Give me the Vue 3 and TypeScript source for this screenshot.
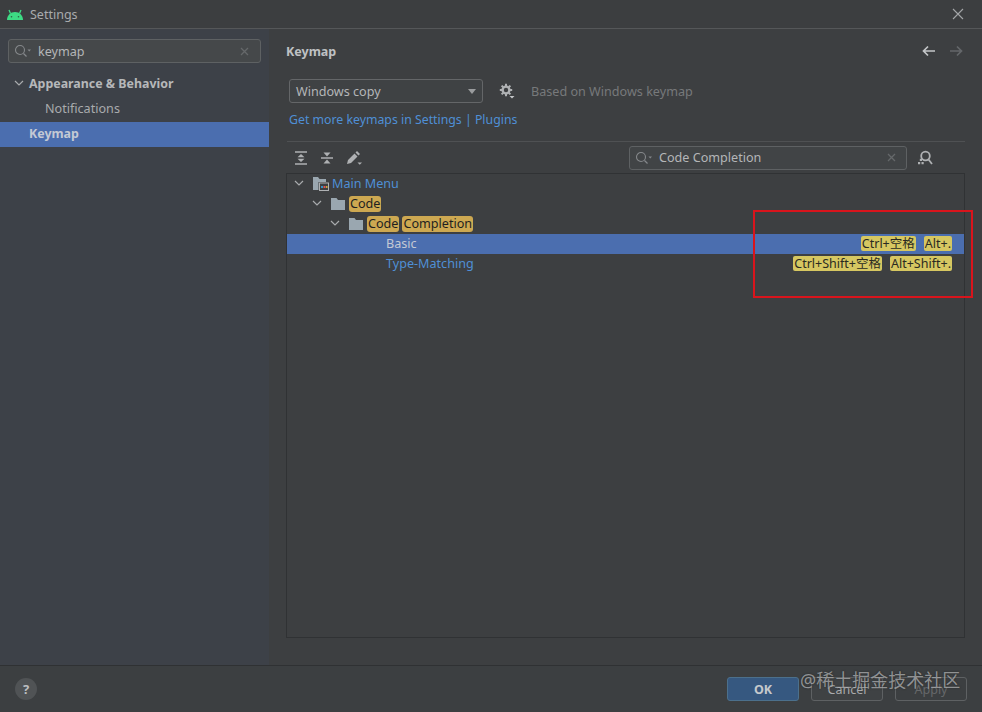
<script setup lang="ts">
  interface Row {
    label: string[];
    kind: 'menu' | 'folder' | 'action';
    depth: number;
    keys?: string[];
    selected?: boolean;
  }

  const rows: Row[] = [
    { label: ['Main Menu'], kind: 'menu', depth: 0 },
    { label: ['Code'], kind: 'folder', depth: 1 },
    { label: ['Code', 'Completion'], kind: 'folder', depth: 2 },
    { label: ['Basic'], kind: 'action', depth: 3, keys: ['Ctrl+空格', 'Alt+.'], selected: true },
    { label: ['Type-Matching'], kind: 'action', depth: 3, keys: ['Ctrl+Shift+空格', 'Alt+Shift+.'] },
  ];
</script>

<template>
  <div class="window">
    <header class="titlebar">
      <svg class="android" width="18" height="14" viewBox="0 0 18 14">
        <path d="M1 13c0-4.500 3.500-8 8-8s8 3.500 8 8z" fill="#3ddc84" />
        <path d="M4.500 6.500 3 3M13.500 6.500 15 3" stroke="#3ddc84" stroke-width="1.300" />
        <circle cx="5.500" cy="9.800" r="0.800" fill="#2f5d45" />
        <circle cx="12.500" cy="9.800" r="0.800" fill="#2f5d45" />
      </svg>
      <span class="title">Settings</span>
      <svg class="close" width="14" height="14" viewBox="0 0 14 14">
        <path d="M2 2l10 10M12 2 2 12" stroke="#a4a6a8" stroke-width="1.100" />
      </svg>
    </header>

    <div class="body">
      <aside class="sidebar">
        <div class="search side-search">
          <svg width="18" height="14" viewBox="0 0 18 14" class="search-icon">
            <circle cx="6" cy="6" r="4.500" fill="none" stroke="#85888b" stroke-width="1.100" />
            <path d="M9.500 9.500 12.500 12.500" stroke="#85888b" stroke-width="1.200" />
            <path d="M13.500 5.500h3.500l-1.750 2z" fill="#85888b" />
          </svg>
          <span class="search-text">keymap</span>
          <svg class="clear" width="9" height="9" viewBox="0 0 9 9">
            <path d="M1 1l7 7M8 1 1 8" stroke="#65686a" stroke-width="1.300" />
          </svg>
        </div>
        <div class="nav-row group">
          <svg class="chevron" width="10" height="7" viewBox="0 0 10 7">
            <path d="M1 1l4 4 4-4" fill="none" stroke="#a9abad" stroke-width="1.200" />
          </svg>
          Appearance &amp; Behavior
        </div>
        <div class="nav-row child">Notifications</div>
        <div class="nav-row group active">Keymap</div>
      </aside>

      <main class="content">
        <div class="content-head">
          <h1>Keymap</h1>
          <svg width="14" height="12" viewBox="0 0 14 12">
            <path d="M13 6H2M6 1.500 1.500 6 6 10.500" fill="none" stroke="#c4c6c8" stroke-width="1.700" />
          </svg>
          <svg width="14" height="12" viewBox="0 0 14 12">
            <path d="M1 6h11M8 1.500 12.500 6 8 10.500" fill="none" stroke="#64676a" stroke-width="1.700" />
          </svg>
        </div>

        <div class="scheme">
          <div class="select">
            <span>Windows copy</span>
            <i class="caret"></i>
          </div>
          <svg class="gear" width="16" height="16" viewBox="0 0 16 16">
            <circle cx="7" cy="7" r="3.400" fill="none" stroke="#afb1b3" stroke-width="2.400" />
            <path d="M7 .8v2.400M7 10.800v2.400M.8 7h2.400M10.800 7h2.400M2.600 2.600l1.700 1.700M9.700 9.700l1.700 1.700M11.400 2.600 9.700 4.300M4.300 9.700l-1.700 1.700" stroke="#afb1b3" stroke-width="2" />
            <path d="M10.500 13h5l-2.500 2.500z" fill="#c4c6c8" />
          </svg>
          <span class="based">Based on Windows keymap</span>
        </div>

        <p class="links">Get more keymaps in Settings | Plugins</p>

        <div class="toolbar">
          <svg width="14" height="14" viewBox="0 0 14 14">
            <path d="M1 1h12M1 13h12" stroke="#afb1b3" stroke-width="1.500" />
            <path d="M7 3 10.500 6.200h-7zM7 11 10.500 7.800h-7z" fill="#afb1b3" />
          </svg>
          <svg width="14" height="14" viewBox="0 0 14 14">
            <path d="M1 7h12" stroke="#afb1b3" stroke-width="1.500" />
            <path d="M7 5.500 10.500 1.500h-7zM7 8.500 10.500 12.500h-7z" fill="#afb1b3" />
          </svg>
          <svg width="17" height="16" viewBox="0 0 17 16">
            <path d="M1 14l1-4 6.500-6.500 3 3L5 13zM9.500 2.500 11 1l3 3-1.500 1.500z" fill="#afb1b3" />
            <path d="M11.500 12.500H16l-2.250 2.200z" fill="#afb1b3" />
          </svg>
          <div class="search tree-search">
            <svg width="18" height="14" viewBox="0 0 18 14" class="search-icon">
              <circle cx="6" cy="6" r="4.500" fill="none" stroke="#85888b" stroke-width="1.100" />
              <path d="M9.500 9.500 12.500 12.500" stroke="#85888b" stroke-width="1.200" />
              <path d="M13.500 5.500h3.500l-1.750 2z" fill="#85888b" />
            </svg>
            <span class="search-text">Code Completion</span>
            <svg class="clear" width="9" height="9" viewBox="0 0 9 9">
              <path d="M1 1l7 7M8 1 1 8" stroke="#65686a" stroke-width="1.300" />
            </svg>
          </div>
          <svg class="find-key" width="16" height="16" viewBox="0 0 16 16">
            <circle cx="8.500" cy="6" r="4.300" fill="none" stroke="#afb1b3" stroke-width="1.800" />
            <path d="M11.500 9.500 15 14" stroke="#afb1b3" stroke-width="1.800" />
            <path d="M1 12h2.200v2.200H1zM4.500 12h2.200v2.200H4.500zM2.800 8.800H5v2.200H2.800z" fill="#afb1b3" />
          </svg>
        </div>

        <div class="tree">
          <div v-for="row in rows" :key="row.label.join()" class="tree-row" :class="{ selected: row.selected }">
            <span class="indent" :style="{ width: row.depth * 18 + 'px' }"></span>
            <svg v-if="row.kind !== 'action'" class="chevron tree-chevron" width="10" height="7" viewBox="0 0 10 7">
              <path d="M1 1l4 4 4-4" fill="none" stroke="#a9abad" stroke-width="1.200" />
            </svg>
            <span v-else class="tree-chevron"></span>
            <svg v-if="row.kind === 'menu'" class="node-icon" width="16" height="14" viewBox="0 0 16 14">
              <path d="M0 0h5l1.500 2H13v3H5.500v8H0z" fill="#9aa7b0" />
              <rect x="6.500" y="6" width="9" height="7.500" fill="none" stroke="#afb1b3" />
              <path d="M8 9h2v2H8z" fill="#3592c4" />
              <path d="M10.500 9h2v2h-2z" fill="#e05555" />
              <path d="M13 9h1.500v2H13z" fill="#c9a83c" />
            </svg>
            <svg v-else-if="row.kind === 'folder'" class="node-icon folder-icon" width="14" height="12" viewBox="0 0 14 12">
              <path d="M0 0h5.500l1.500 2H14v10H0z" fill="#9aa7b0" />
            </svg>
            <span v-else class="node-icon blank"></span>
            <span class="labels" :class="row.kind">
              <template v-if="row.kind === 'folder'">
                <mark v-for="part in row.label" :key="part" class="hit">{{ part }}</mark>
              </template>
              <template v-else>{{ row.label[0] }}</template>
            </span>
            <span class="keys">
              <mark v-for="k in row.keys" :key="k" class="key">{{ k }}</mark>
            </span>
          </div>
        </div>
      </main>
    </div>

    <footer class="footer">
      <span class="help">?</span>
      <button class="btn primary">OK</button>
      <button class="btn">Cancel</button>
      <button class="btn disabled">Apply</button>
    </footer>

    <div class="annotation"></div>
    <div class="watermark">@稀土掘金技术社区</div>
  </div>
</template>

<style>
html, body {
  margin: 0;
  background: #3c3f41;
}
</style>

<style scoped>
.window {
  position: relative;
  width: 982px;
  height: 712px;
  display: flex;
  flex-direction: column;
  overflow: hidden;
  background: #3d3f41;
  color: #bbbbbb;
  font-family: "Noto Sans", "Noto Sans CJK SC", sans-serif;
  font-size: 12.600px;
}

.titlebar {
  height: 28px;
  flex: none;
  display: flex;
  align-items: center;
  padding: 0 11px 0 6px;
  border-bottom: 1px solid #555759;
  background: #3c3e40;
}

.android { margin-right: 6px; }
.title { color: #a9abad; font-size: 12.500px; }
.close { margin-left: auto; margin-right: 6px; }

.body {
  flex: 1;
  min-height: 0;
  display: flex;
}

.sidebar {
  width: 269px;
  flex: none;
  padding-top: 10px;
  background: #3d4148;
  box-sizing: border-box;
}

.search {
  display: flex;
  align-items: center;
  height: 24px;
  box-sizing: border-box;
  border: 1px solid #5e6163;
  border-radius: 3px;
  padding: 0 11px 0 5px;
  background: #45484a;
}

.side-search {
  margin: 0 8px 9px;
}

.search-icon { flex: none; }
.search-text { margin-left: 6px; color: #b4b6b8; }
.clear { margin-left: auto; }

.nav-row {
  height: 25px;
  box-sizing: border-box;
  padding: 0 0 2px 29px;
  display: flex;
  align-items: center;
  position: relative;
}

.group { font-weight: 700; color: #b6b8ba; font-size: 12.400px; }
.group .chevron { position: absolute; left: 14px; top: 8px; }
.child { padding-left: 45px; color: #a9abad; }
.active { background: #4b6eaf; color: #c4c9d4; }

.content {
  flex: 1;
  min-width: 0;
  padding: 0 17px 0 17px;
  display: flex;
  flex-direction: column;
}

.content-head {
  display: flex;
  align-items: center;
  gap: 13px;
  height: 44px;
  padding-right: 2px;
}

.content-head h1 {
  margin: 0 auto 0 0;
  font-size: 12.500px;
  font-weight: 700;
  color: #bfc1c3;
}

.scheme {
  display: flex;
  align-items: center;
  margin: 6px 0 0 3px;
}

.select {
  width: 194px;
  height: 24px;
  box-sizing: border-box;
  border: 1px solid #646668;
  border-radius: 3px;
  padding: 0 6px 0 6px;
  display: flex;
  align-items: center;
  justify-content: space-between;
  background: #3f4244;
  color: #b4b6b8;
}

.caret {
  width: 0;
  height: 0;
  border-left: 4.500px solid transparent;
  border-right: 4.500px solid transparent;
  border-top: 5px solid #9a9c9e;
}

.gear { margin-left: 16px; }

.based {
  margin-left: 16px;
  color: #77797b;
}

.links {
  margin: 6px 0 0 3px;
  height: 22px;
  line-height: 22px;
  font-size: 12.300px;
  color: #4f8fd6;
}

.toolbar {
  display: flex;
  align-items: center;
  gap: 12px;
  height: 31px;
  margin: 10px 0 0 1px;
  padding-left: 7px;
  border-top: 1px solid #4f5153;
}

.tree-search {
  width: 278px;
  margin-left: auto;
  padding: 0 10px 0 5px;
  background: #414446;
}

.find-key { margin: 0 32px 0 -2px; }

.tree {
  flex: 1;
  margin: 0 0 27px 0;
  border: 1px solid #303234;
}

.tree-row {
  height: 20px;
  box-sizing: border-box;
  padding: 0 0 1px 7px;
  display: flex;
  align-items: center;
}

.selected { background: #4b6eaf; }
.indent { flex: none; }
.tree-chevron { flex: none; width: 10px; margin-right: 9px; }
.node-icon { flex: none; margin-right: 3px; }
.node-icon.folder-icon { margin-right: 4px; }
.node-icon.blank { width: 16px; }

.labels { display: flex; gap: 3px; }
.menu, .action { color: #4f8fd6; }
.selected .labels { color: #c4c9d4; }

.hit {
  background: #cda851;
  color: #1f1f1f;
  border-radius: 3px;
  padding: 0 1px;
  line-height: 16px;
}

.keys {
  margin-left: auto;
  padding-right: 12px;
  display: flex;
  gap: 8px;
  align-items: center;
}

.key {
  background: #d6c761;
  color: #2a2a22;
  border-radius: 2px;
  padding: 0 1px;
  line-height: 15px;
  font-size: 12.500px;
}

.footer {
  height: 46px;
  flex: none;
  display: flex;
  align-items: center;
  gap: 12px;
  padding: 0 15px;
  border-top: 1px solid #2f3133;
  background: #3c3f41;
}

.help {
  width: 22px;
  height: 22px;
  border-radius: 50%;
  margin-right: auto;
  background: #505355;
  display: flex;
  align-items: center;
  justify-content: center;
  font-weight: 700;
  font-size: 13px;
  color: #bdbfc1;
}

.btn {
  width: 72px;
  height: 24px;
  box-sizing: border-box;
  border: 1px solid #5e6163;
  border-radius: 3px;
  background: #3f4244;
  color: #a9abad;
  font: inherit;
  font-size: 12.500px;
  padding: 0;
}

.primary {
  border-color: #4c708c;
  background: #365880;
  color: #c5c9cc;
  font-weight: 700;
}

.disabled {
  background: transparent;
  color: #66686a;
}

.annotation {
  position: absolute;
  left: 753px;
  top: 210px;
  width: 220px;
  height: 88px;
  box-sizing: border-box;
  border: 2px solid #d9141c;
}

.watermark {
  position: absolute;
  left: 800px;
  top: 669px;
  font-size: 18px;
  line-height: 22px;
  color: rgba(210, 212, 214, 0.6);
  text-shadow: 0 0 2px rgba(30, 30, 30, 0.7);
  white-space: nowrap;
}
</style>
